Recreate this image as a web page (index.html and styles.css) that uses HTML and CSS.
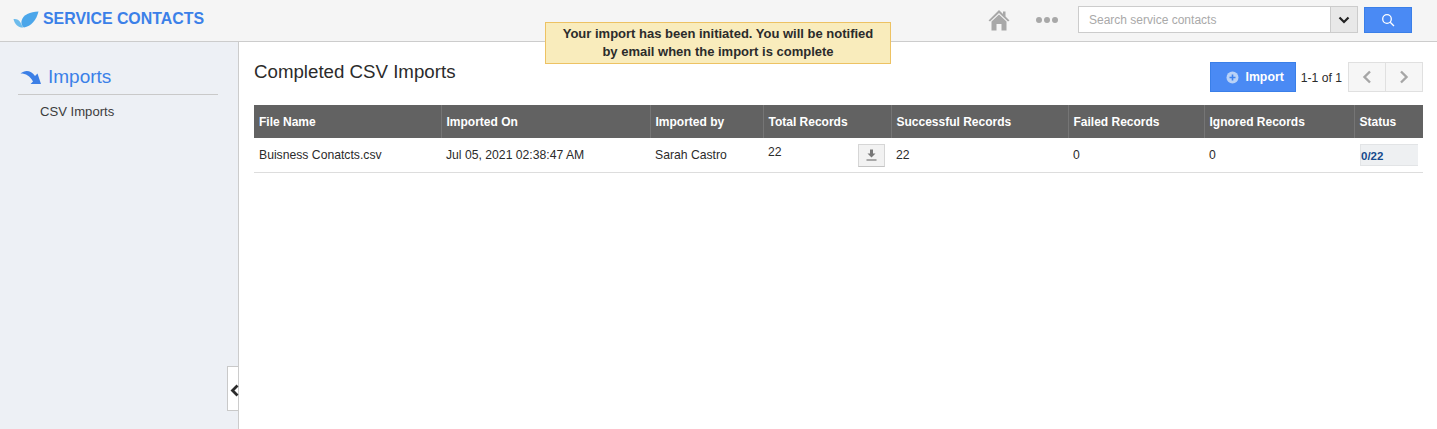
FILE: index.html
```html
<!DOCTYPE html>
<html lang="en">
<head>
    <meta charset="UTF-8">
    <title>Service Contacts - Imports</title>
    <link rel="stylesheet" href="styles.css">
</head>
<body>
    <header class="topbar">
        <div class="brand">
            <svg class="brand-logo" width="26" height="17" viewBox="0 0 26 17">
                <path d="M25.500 0.500C17 1 10 3.500 8.500 10C8 12.500 9 15.500 11 16.500C18 15.500 23.500 9 25.500 0.500Z" fill="#4ba6ea"/>
                <path d="M0.500 8C3 7.500 6 8.500 7.500 11.500C8.500 13.500 9.500 15.500 10.500 16.500C6 17 1.500 13.500 0.500 8Z" fill="#6dbcec"/>
            </svg>
            <span class="brand-name">SERVICE CONTACTS</span>
        </div>
        <div class="topbar-tools">
            <svg class="home-icon" width="22" height="22" viewBox="0 0 22 22">
                <path d="M11 1L0.500 11.500L2 12.500L11 4L20 12.500L21.500 11.500L17.500 7.500V2.500H15V5L11 1Z" fill="#a8a8a8"/>
                <path d="M11 5.500L3.500 12.500V21.500H8.500V15H13.500V21.500H18.500V12.500L11 5.500Z" fill="#a8a8a8"/>
            </svg>
            <div class="more-dots"><i></i><i></i><i></i></div>
            <div class="search-box">
                <input class="search-input" type="text" placeholder="Search service contacts">
                <span class="search-drop">
                    <svg width="12" height="8" viewBox="0 0 12 8"><path d="M1.500 1.500L6 6L10.500 1.500" fill="none" stroke="#222" stroke-width="2.200"/></svg>
                </span>
            </div>
            <button class="search-btn">
                <svg width="14" height="14" viewBox="0 0 14 14"><circle cx="6" cy="6" r="4.300" fill="none" stroke="#fff" stroke-width="1.300"/><path d="M9.200 9.200L13 13" stroke="#fff" stroke-width="1.300"/></svg>
            </button>
        </div>
    </header>

    <div class="notice">Your import has been initiated. You will be notified by email when the import is complete</div>

    <div class="layout">
        <aside class="sidebar">
            <div class="side-title">
                <svg width="22" height="16" viewBox="0 0 22 16">
                    <path d="M0.500 4.500C5 0.500 11 1 15 7L17.500 4.500L21 15H10.500L13 12.500C10 7 6 4.500 0.500 4.500Z" fill="#3c7fe6"/>
                </svg>
                <span>Imports</span>
            </div>
            <a class="side-link">CSV Imports</a>
            <div class="side-toggle">
                <svg width="9" height="13" viewBox="0 0 9 13"><path d="M7.500 1.500L2.500 6.500L7.500 11.500" fill="none" stroke="#2b2b2b" stroke-width="2.800"/></svg>
            </div>
        </aside>

        <main class="content">
            <div class="content-head">
                <h1>Completed CSV Imports</h1>
                <div class="content-actions">
                    <button class="import-btn">
                        <svg width="13" height="13" viewBox="0 0 13 13"><circle cx="6.500" cy="6.500" r="6" fill="#b9d2f7"/><path d="M6.500 3.500V9.500M3.500 6.500H9.500" stroke="#3f83ee" stroke-width="1.600"/></svg>
                        <span>Import</span>
                    </button>
                    <span class="page-count">1-1 of 1</span>
                    <div class="pager">
                        <span class="pager-btn"><svg width="10" height="14" viewBox="0 0 10 14"><path d="M8 1.500L2.500 7L8 12.500" fill="none" stroke="#a6a6a6" stroke-width="2.400"/></svg></span>
                        <span class="pager-btn"><svg width="10" height="14" viewBox="0 0 10 14"><path d="M2 1.500L7.500 7L2 12.500" fill="none" stroke="#a6a6a6" stroke-width="2.400"/></svg></span>
                    </div>
                </div>
            </div>

            <table class="imports-table">
                <colgroup>
                    <col class="col-file"><col class="col-date"><col class="col-by"><col class="col-total">
                    <col class="col-ok"><col class="col-failed"><col class="col-ignored"><col class="col-status">
                </colgroup>
                <thead>
                    <tr>
                        <th>File Name</th>
                        <th>Imported On</th>
                        <th>Imported by</th>
                        <th>Total Records</th>
                        <th>Successful Records</th>
                        <th>Failed Records</th>
                        <th>Ignored Records</th>
                        <th>Status</th>
                    </tr>
                </thead>
                <tbody>
                    <tr>
                        <td>Buisness Conatcts.csv</td>
                        <td>Jul 05, 2021 02:38:47 AM</td>
                        <td>Sarah Castro</td>
                        <td>
                            <div class="total-cell">
                                <span class="total-num">22</span>
                                <button class="download-btn">
                                    <svg width="11" height="12" viewBox="0 0 11 12"><path d="M4 0.500H7V4.500H9.500L5.500 8.500L1.500 4.500H4V0.500Z" fill="#777"/><path d="M0.500 11H10.500" stroke="#888" stroke-width="1.400"/></svg>
                                </button>
                            </div>
                        </td>
                        <td>22</td>
                        <td>0</td>
                        <td>0</td>
                        <td><div class="progress">0/22</div></td>
                    </tr>
                </tbody>
            </table>
        </main>
    </div>
</body>
</html>
```

FILE: styles.css
```css
* {
    margin: 0;
    padding: 0;
    box-sizing: border-box;
}

html, body {
    height: 100%;
    overflow: hidden;
}

body {
    font-family: "Liberation Sans", Arial, sans-serif;
    font-size: 12px;
    color: #2b2b2b;
    background: #fff;
    position: relative;
    display: flex;
    flex-direction: column;
}

.topbar {
    height: 42px;
    flex: none;
    display: flex;
    align-items: center;
    justify-content: space-between;
    padding: 0 25px 2px 13px;
    background: #f5f5f5;
    border-bottom: 1px solid #cccccc;
}

.brand {
    display: flex;
    align-items: center;
    gap: 4px;
}

.brand-name {
    font-size: 15.900px;
    font-weight: 700;
    color: #3b80e8;
    margin-top: -1px;
}

.topbar-tools {
    display: flex;
    align-items: center;
}

.home-icon {
    margin-right: 26px;
}

.more-dots {
    display: flex;
    gap: 2px;
    margin-right: 20px;
}

.more-dots i {
    width: 6px;
    height: 6px;
    border-radius: 50%;
    background: #a8a8a8;
}

.search-box {
    display: flex;
    width: 280px;
    height: 27px;
    border: 1px solid #cccccc;
    background: #fff;
}

.search-input {
    flex: 1;
    min-width: 0;
    border: 0;
    outline: 0;
    padding: 0 10px;
    font-family: inherit;
    font-size: 12px;
    background: transparent;
}

.search-input::placeholder {
    color: #a9a9a9;
    opacity: 1;
}

.search-drop {
    width: 27px;
    display: flex;
    align-items: center;
    justify-content: center;
    background: #e8e8e8;
    border-left: 1px solid #cccccc;
}

.search-btn {
    width: 48px;
    height: 26px;
    margin-left: 6px;
    border: 1px solid #3a7fe8;
    background: #4a8af4;
    display: flex;
    align-items: center;
    justify-content: center;
}

.notice {
    position: absolute;
    left: 545px;
    top: 22px;
    width: 346px;
    height: 42px;
    padding: 2px 16px;
    background: #f9ecbc;
    border: 1px solid #edc263;
    font-size: 13px;
    font-weight: 700;
    line-height: 18px;
    text-align: center;
    color: #2b2b2b;
}

.layout {
    flex: 1;
    display: flex;
    min-height: 0;
}

.sidebar {
    position: relative;
    width: 239px;
    flex: none;
    padding: 22px 20px 0 18px;
    background: #edf0f5;
    border-right: 1px solid #cccccc;
}

.side-title {
    display: flex;
    align-items: center;
    gap: 6px;
    height: 31px;
    padding: 0 0 4px 2px;
    border-bottom: 1px solid #c9c9c9;
    font-size: 19px;
    color: #3b80e8;
}

.side-link {
    display: block;
    padding: 9px 0 0 22px;
    font-size: 13.100px;
    color: #3c3c3c;
}

.side-toggle {
    position: absolute;
    right: 0;
    top: 324px;
    width: 11px;
    height: 45px;
    display: flex;
    align-items: center;
    background: #fff;
    border: 1px solid #c9c9c9;
    border-right: 0;
    padding: 4px 0 0 2px;
}

.side-toggle svg {
    flex: none;
}

.content {
    flex: 1;
    min-width: 0;
    padding: 0 14px 0 15px;
}

.content-head {
    height: 63px;
    display: flex;
    justify-content: space-between;
}

h1 {
    font-size: 18.700px;
    font-weight: 400;
    color: #2b2b2b;
    padding-top: 19px;
}

.content-actions {
    display: flex;
    align-items: flex-start;
    padding-top: 20px;
}

.import-btn {
    width: 86px;
    height: 30px;
    display: flex;
    align-items: center;
    justify-content: center;
    gap: 7px;
    padding-left: 4px;
    border: 1px solid #3a7fe8;
    background: #4a8af4;
    color: #fff;
    font-family: inherit;
    font-size: 12.300px;
    font-weight: 700;
}

.page-count {
    margin: 0 6px 0 5px;
    line-height: 32px;
    font-size: 12.200px;
    color: #2b2b2b;
}

.pager {
    display: flex;
    width: 75px;
    height: 30px;
    border: 1px solid #e0e0e0;
    background: #f6f6f6;
}

.pager-btn {
    flex: 1;
    display: flex;
    align-items: center;
    justify-content: center;
}

.pager-btn + .pager-btn {
    border-left: 1px solid #e0e0e0;
}

.imports-table {
    width: 1169px;
    table-layout: fixed;
    border-collapse: collapse;
}

.col-file { width: 187px; }
.col-date { width: 209px; }
.col-by { width: 113px; }
.col-total { width: 128px; }
.col-ok { width: 177px; }
.col-failed { width: 136px; }
.col-ignored { width: 150px; }
.col-status { width: 69px; }

.imports-table th {
    height: 33px;
    padding: 0 5px;
    background: #626262;
    border-left: 1px solid #757575;
    color: #fff;
    font-size: 12px;
    font-weight: 700;
    text-align: left;
}

.imports-table th:first-child {
    border-left: 0;
}

.imports-table td {
    height: 34px;
    padding: 0 5px;
    border-bottom: 1px solid #dddddd;
    font-size: 12.200px;
    color: #2b2b2b;
    vertical-align: middle;
}

.total-cell {
    display: flex;
    justify-content: space-between;
    align-items: flex-start;
}

.total-num {
    margin-top: 2px;
}

.download-btn {
    width: 27px;
    height: 23px;
    margin: 1px 1px 0 0;
    display: flex;
    align-items: center;
    justify-content: center;
    background: #f2f2f2;
    border: 1px solid #d6d6d6;
    border-bottom-color: #c4c4c4;
}

.progress {
    width: 58px;
    height: 22px;
    margin-left: 1px;
    line-height: 21px;
    padding-top: 1px;
    background: #eef0f2;
    border: 1px solid #e2e4e6;
    border-width: 1px 0 1px 1px;
    font-size: 11.500px;
    font-weight: 700;
    color: #164a8c;
}
```
